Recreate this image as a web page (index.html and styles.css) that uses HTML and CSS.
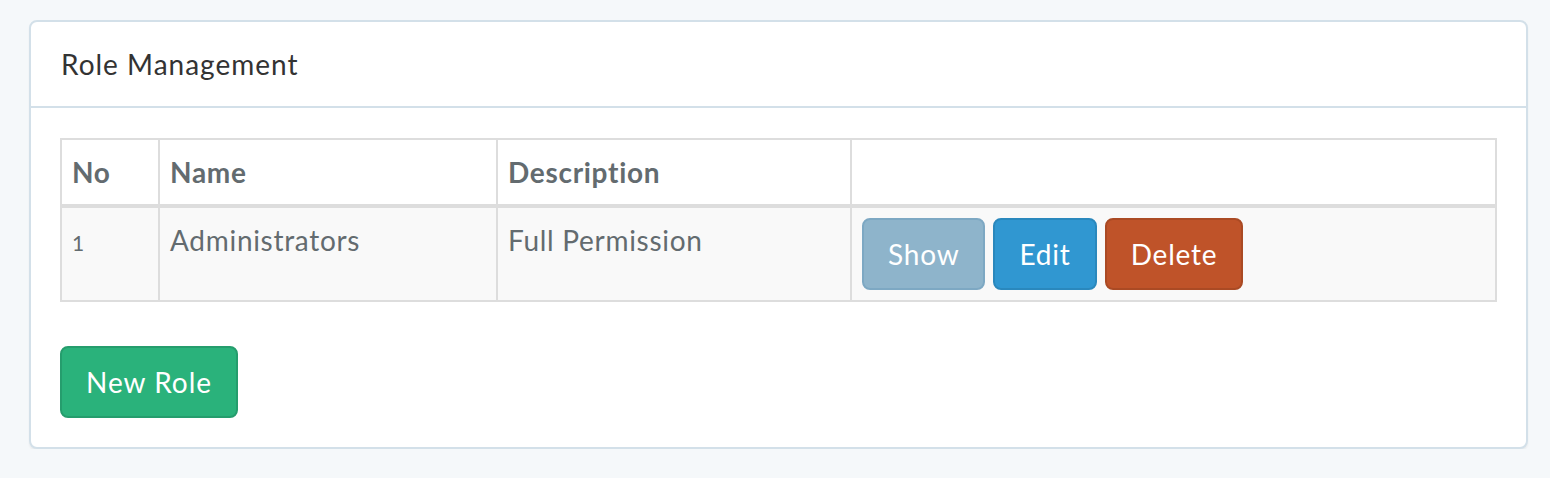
FILE: index.html
```html
<!DOCTYPE html>
<html lang="en">
<head>
<meta charset="utf-8">
<title>Role Management</title>
<link rel="stylesheet" href="styles.css">
</head>
<body>
<div class="page">
  <div class="panel">
    <div class="panel-heading">Role Management</div>
    <div class="panel-body">
      <table class="table">
        <colgroup>
          <col class="c-no">
          <col class="c-name">
          <col class="c-desc">
          <col class="c-act">
        </colgroup>
        <thead>
          <tr>
            <th>No</th>
            <th>Name</th>
            <th>Description</th>
            <th></th>
          </tr>
        </thead>
        <tbody>
          <tr>
            <td><span class="num">1</span></td>
            <td>Administrators</td>
            <td>Full Permission</td>
            <td>
              <div class="actions">
                <a class="btn btn-info">Show</a>
                <a class="btn btn-primary">Edit</a>
                <a class="btn btn-danger">Delete</a>
              </div>
            </td>
          </tr>
        </tbody>
      </table>
      <a class="btn btn-success">New Role</a>
    </div>
  </div>
</div>
</body>
</html>
```

FILE: styles.css
```css
* { box-sizing: border-box; }
html, body {
  margin: 0;
  padding: 0;
  background: #f5f8fa;
  font-family: "Lato", "Liberation Sans", sans-serif;
  font-size: 28px;
  line-height: 44px;
  letter-spacing: 0.7px;
  color: #636b6f;
}
.page {
  padding: 20px 22px 0 29px;
}
.panel {
  background: #fff;
  border: 2px solid #d3e0e9;
  border-radius: 8px;
  box-shadow: 0 2px 2px rgba(0, 0, 0, 0.05);
}
.panel-heading {
  padding: 20px 30px;
  color: #333;
  letter-spacing: 1px;
  border-bottom: 2px solid #d3e0e9;
}
.panel-body {
  padding: 30px 29px 29px;
}
.table {
  width: 100%;
  border-collapse: collapse;
  border: 2px solid #ddd;
  margin-bottom: 44px;
  table-layout: fixed;
}
.c-no { width: 98px; }
.c-name { width: 338px; }
.c-desc { width: 354px; }
.table th,
.table td {
  border: 2px solid #ddd;
  padding: 10px;
  text-align: left;
  vertical-align: top;
}
.table th {
  font-weight: 700;
  vertical-align: bottom;
  border-bottom-width: 4px;
}
.table tbody tr {
  background: #f9f9f9;
}
.num {
  font-size: 21px;
}
.actions {
  display: flex;
  gap: 8px;
}
.btn {
  display: inline-block;
  padding: 12px 24px;
  font-size: 28px;
  line-height: 44px;
  color: #fff;
  border: 2px solid transparent;
  border-radius: 8px;
  text-decoration: none;
  white-space: nowrap;
  letter-spacing: 0.8px;
}
.btn-success { letter-spacing: 1px; }
.btn-info { background: #8eb4cb; border-color: #7da8c3; }
.btn-primary { background: #3097d1; border-color: #2a88bd; }
.btn-danger { background: #bf5329; border-color: #aa4a24; }
.btn-success { background: #2ab27b; border-color: #259d6d; }
```
